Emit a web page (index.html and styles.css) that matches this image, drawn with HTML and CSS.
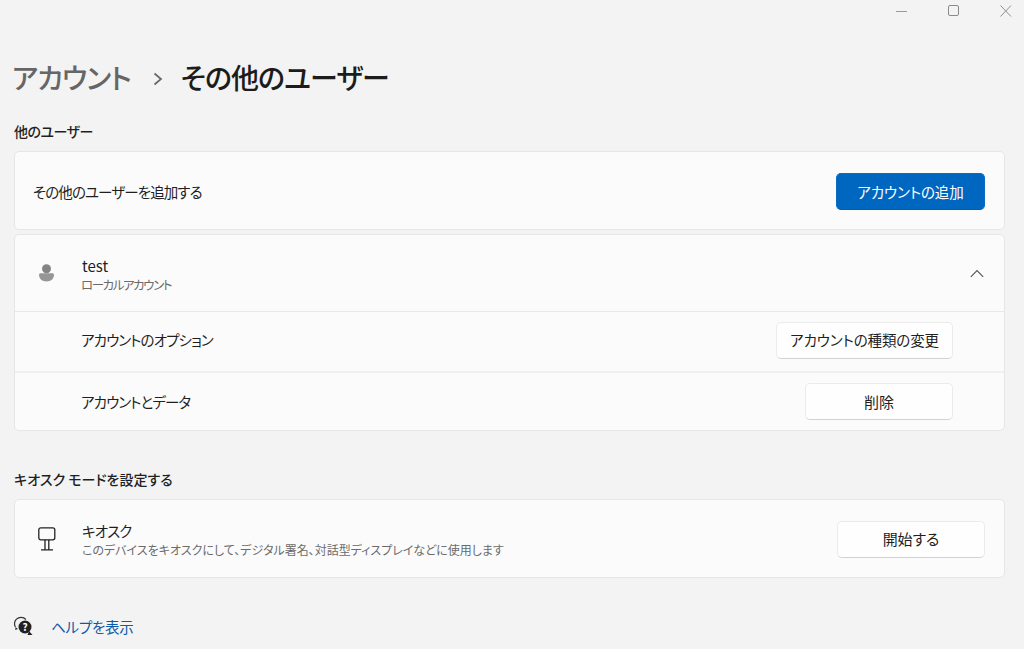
FILE: index.html
```html
<!DOCTYPE html>
<html lang="ja">
<head>
<meta charset="utf-8">
<title>その他のユーザー</title>
<link rel="stylesheet" href="styles.css">
</head>
<body>
<div class="window-controls">
  <svg class="wc" width="12" height="12" viewBox="0 0 12 12"><path d="M0 6.500h11" stroke="#9a9a9a" fill="none"/></svg>
  <svg class="wc" width="12" height="12" viewBox="0 0 12 12"><rect x=".5" y=".5" width="10" height="10" rx="1.500" stroke="#8a8a8a" fill="none"/></svg>
  <svg class="wc" width="12" height="12" viewBox="0 0 12 12"><path d="M.5.5l10.500 11M11 .5L.5 11.500" stroke="#8f8f8f" fill="none"/></svg>
</div>
<main class="page">
  <h1 class="crumbs">
    <span class="crumb-parent">アカウント</span>
    <svg class="crumb-sep" width="10" height="14" viewBox="0 0 10 14"><path d="M1.500 1.500L8 7l-6.500 5.500" stroke="#666" stroke-width="1.700" fill="none"/></svg>
    <span class="crumb-current">その他のユーザー</span>
  </h1>
  <h2 class="section-title first">他のユーザー</h2>
  <section class="card row add-row">
    <span class="label">その他のユーザーを追加する</span>
    <button class="btn primary">アカウントの追加</button>
  </section>
  <section class="card expander">
    <div class="row user-row">
      <span class="icon-slot">
        <svg class="avatar" width="15" height="18" viewBox="0 0 15 18"><circle cx="7.500" cy="4.800" r="4.500" fill="#858585"/><path d="M0 10.800c0-.9.7-1.500 1.600-1.500h11.800c.9 0 1.600.6 1.600 1.500 0 4.200-3.400 6.700-7.500 6.700S0 15 0 10.800z" fill="#969696"/></svg>
      </span>
      <div class="text-stack user-text">
        <span class="label latin">test</span>
        <span class="sub tight">ローカルアカウント</span>
      </div>
      <svg class="chevron" width="14" height="9" viewBox="0 0 14 9"><path d="M.8 7.800L7 1.500l6.200 6.300" stroke="#555" stroke-width="1.100" fill="none"/></svg>
    </div>
    <div class="row sub-row">
      <span class="label">アカウントのオプション</span>
      <button class="btn">アカウントの種類の変更</button>
    </div>
    <div class="row sub-row thick">
      <span class="label">アカウントとデータ</span>
      <button class="btn wide">削除</button>
    </div>
  </section>
  <h2 class="section-title second">キオスク モードを設定する</h2>
  <section class="card row kiosk-row">
    <span class="icon-slot">
      <svg class="kiosk-icon" width="18" height="24" viewBox="0 0 18 24"><rect x=".8" y=".8" width="16" height="12" rx="2" stroke="#222" stroke-width="1.300" fill="none"/><path d="M7 12.800V22.500M10.800 12.800V22.500M3 22.800h12" stroke="#222" stroke-width="1.300" fill="none"/></svg>
    </span>
    <div class="text-stack kiosk-text">
      <span class="label">キオスク</span>
      <span class="sub">このデバイスをキオスクにして、デジタル署名、対話型ディスプレイなどに使用します</span>
    </div>
    <button class="btn wide end">開始する</button>
  </section>
  <footer class="help">
    <svg width="20" height="20" viewBox="0 0 20 20"><path d="M1.500 11c-.8-1-1-2-1-3.200C.5 4 3.500 1.300 7 1.300c2 0 3.700.8 4.900 2.200" stroke="#333" stroke-width="1.200" fill="none"/><path d="M1.500 11l-.3 3 2.800-1" fill="#333"/><circle cx="11" cy="11" r="6.500" fill="#222"/><path d="M15 15l3.500 4h-5z" fill="#222"/><text x="11" y="14.500" class="help-q">?</text></svg>
    <a class="help-link" href="#">ヘルプを表示</a>
  </footer>
</main>
</body>
</html>
```
FILE: styles.css
```css
* { box-sizing: border-box; }
html, body { margin: 0; padding: 0; height: 100%; overflow: hidden; }
body {
  background: #f3f3f3;
  color: #1f1f1f;
  font-family: "Noto Sans CJK JP", "Noto Sans", sans-serif;
  font-feature-settings: "palt";
  font-size: 15px;
}
.window-controls { display: flex; justify-content: flex-end; gap: 40px; height: 18px; padding: 5px 12px 0 0; }
.wc { display: block; }
.page { padding: 0 19px 0 14px; }
.crumbs { display: flex; align-items: center; margin: 39px 0 0 -2px; height: 40px; font-size: 28px; letter-spacing: -1px; font-weight: 500; line-height: 40px; }
.crumb-parent { color: #666; }
.crumb-sep { margin: 4px 18px 0 22px; }
.crumb-current { color: #1c1c1c; }
.section-title { margin: 0; font-size: 14px; font-weight: 500; line-height: 20px; }
.section-title.first { margin-top: 24px; margin-bottom: 10px; letter-spacing: -.5px; }
.section-title.second { margin-top: 38px; margin-bottom: 10px; }
.card { background: #fbfbfb; border: 1px solid #e6e6e6; border-radius: 5px; }
.row { display: flex; align-items: center; }
.add-row { height: 79px; padding: 2px 19px 0 18px; justify-content: space-between; }
.expander { margin-top: 4px; height: 197px; }
.user-row { height: 77px; padding: 0 20px 0 21px; border-bottom: 1px solid #e8e8e8; }
.icon-slot { display: flex; width: 46px; justify-content: flex-start; flex: none; }
.avatar { margin-left: 3px; }
.kiosk-icon { margin-left: 2px; }
.text-stack { display: flex; flex-direction: column; flex: 1; line-height: 18px; }
.user-text { padding-top: 4px; }
.kiosk-text { padding-top: 2px; }
.chevron { flex: none; }
.sub-row { height: 59px; padding: 0 51px 3px 66px; justify-content: space-between; }
.sub-row.thick { border-top: 2px solid #f0f0f0; padding-bottom: 0; }
.label { font-size: 14.500px; letter-spacing: -.9px; color: #1f1f1f; line-height: 20px; }
.label.latin { font-size: 15px; letter-spacing: 0; }
.sub { font-size: 12px; color: #6b6b6b; line-height: 18px; }
.sub.tight { font-size: 12.500px; letter-spacing: -1.450px; margin-left: -1px; }
.btn {
  font: inherit; font-feature-settings: "palt"; font-size: 14.500px; line-height: 20px; letter-spacing: -.1px;
  height: 37px; padding: 0 13px; color: #1f1f1f; background: #fefefe;
  border: 1px solid #ebebeb; border-bottom-color: #d2d2d2; border-radius: 5px;
}
.btn.primary { width: 149px; background: #0067c0; color: #fff; border-color: #0a6cc2; border-bottom-color: #0a5aa5; }
.btn.wide { width: 148px; font-size: 15px; }
.btn.end { flex: none; }
.kiosk-row { height: 79px; padding: 1px 19px 0 21px; }
.help { display: flex; align-items: center; gap: 17px; margin-top: 37px; height: 22px; }
.help-q { font-size: 10px; font-weight: 700; fill: #fff; text-anchor: middle; }
.help-link { color: #0f5aa8; text-decoration: none; font-size: 14.500px; letter-spacing: -.25px; }
```
